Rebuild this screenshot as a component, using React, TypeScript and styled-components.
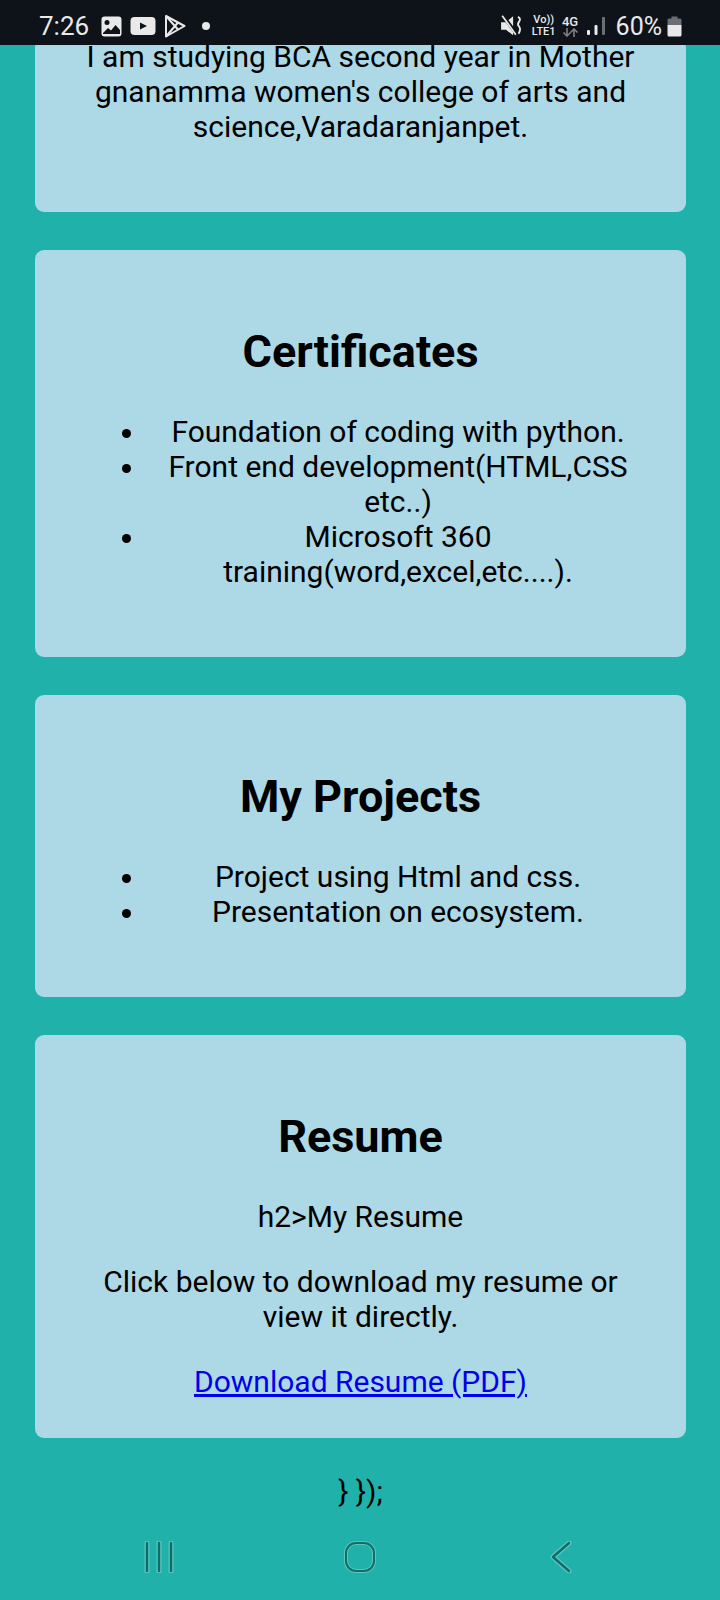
import styled, { createGlobalStyle } from "styled-components";

const GlobalStyle = createGlobalStyle`
  html, body {
    margin: 0;
    padding: 0;
    background: #20b2aa;
  }
`;

const Screen = styled.div`
  width: 720px;
  height: 1600px;
  overflow: hidden;
  display: flex;
  flex-direction: column;
  background: #20b2aa;
  color: #000;
  font-family: Roboto, "Liberation Sans", sans-serif;
`;

const StatusBar = styled.header`
  flex: none;
  height: 45px;
  padding: 7px 38px 0 39px;
  box-sizing: border-box;
  display: flex;
  align-items: center;
  background: #0d1319;
  color: #e9e9e9;
`;

const Time = styled.span`
  font-size: 26px;
  margin-right: 12px;
`;

const StatusIcons = styled.div`
  display: flex;
  align-items: center;
  gap: 8px;
`;

const Dot = styled.span`
  width: 8px;
  height: 8px;
  margin-left: 16px;
  border-radius: 50%;
  background: #e9e9e9;
`;

const Right = styled.div`
  margin-left: auto;
  display: flex;
  align-items: center;
`;

const Tiny = styled.div<{ $left: number; $size: number }>`
  display: flex;
  flex-direction: column;
  align-items: center;
  font-size: ${(p) => p.$size}px;
  font-weight: 500;
  line-height: 12px;
  margin-left: ${(p) => p.$left}px;
`;

const Percent = styled.span`
  font-size: 25px;
  margin-left: 10px;
`;

const Scroll = styled.main`
  flex: 1;
  min-height: 0;
  overflow: hidden;
  padding: 0 34px 0 35px;
  text-align: center;
  font-size: 30px;
`;

const Card = styled.section<{ $clipped?: boolean }>`
  background: #add8e6;
  border-radius: 9px;
  padding: ${(p) => (p.$clipped ? "0 40px 37.6px" : "37.3px 40px 38.6px")};
  margin: ${(p) => (p.$clipped ? "-5.6px" : "38px")} 0 0;
`;

const Heading = styled.h2`
  margin: 37.35px 0 36px;
  font-size: 45px;
  font-weight: 700;
`;

const Text = styled.p`
  margin: 0 0 30px;

  &:last-child {
    margin-bottom: 0;
  }
  &:only-child {
    margin-bottom: 30px;
  }
`;

const List = styled.ul`
  margin: 0 0 30px;
  padding: 0 0 0 72px;
`;

const Item = styled.li`
  padding-left: 3px;
`;

const ResumeLink = styled.a`
  color: #0000ee;
  text-decoration: underline;
`;

const Closing = styled.div`
  margin-top: 36px;
`;

const NavBar = styled.nav`
  flex: none;
  height: 80px;
  display: grid;
  grid-template-columns: repeat(3, 201px);
  justify-content: center;
  justify-items: center;
  align-items: start;
  padding-top: 21px;
  box-sizing: border-box;
`;

function ImageIcon() {
  return (
    <svg width="21" height="21" viewBox="0 0 21 21">
      <rect x="0.5" y="0.5" width="20" height="20" rx="3" fill="#e9e9e9" />
      <circle cx="6" cy="6.5" r="2.5" fill="#0d1319" />
      <path d="M2 17 L7 12 L10 14.5 L14.5 9 L19 14 V18 H2 Z" fill="#0d1319" />
    </svg>
  );
}

function VideoIcon() {
  return (
    <svg width="26" height="18" viewBox="0 0 26 18">
      <rect width="25" height="18" x="0.5" rx="4" fill="#e9e9e9" />
      <path d="M10 5.5 L17 9 L10 12.5 Z" fill="#0d1319" />
    </svg>
  );
}

function PlayStoreIcon() {
  return (
    <svg width="22" height="24" viewBox="0 0 22 24" fill="none" stroke="#e9e9e9" strokeWidth="2" strokeLinejoin="round">
      <path d="M2 2 L20.5 12 L2 22.5 Z" />
      <path d="M2 2 L14 15.5 M2 22.5 L14 8.5" />
    </svg>
  );
}

function MuteIcon() {
  return (
    <svg width="24" height="22" viewBox="0 0 22 20">
      <path d="M1 6.5 H5.5 L12 1 V18.5 L5.5 13.5 H1 Z" fill="#e9e9e9" />
      <path d="M3 1 L15 17" stroke="#0d1319" strokeWidth="3.2" />
      <path d="M2 0.5 L14.5 18" stroke="#e9e9e9" strokeWidth="1.6" />
      <path d="M16.5 1.5 q3 2 1 4.5 q-2 2.5 0 4.5 q2 2.5 -0.5 6.5" fill="none" stroke="#e9e9e9" strokeWidth="1.7" />
    </svg>
  );
}

function TransferIcon() {
  return (
    <svg width="17" height="9" viewBox="0 0 17 9" fill="none" stroke="#7d8084" strokeWidth="1.6">
      <path d="M5 0 V8 M1.5 4.5 L5 8 L8.5 4.5" />
      <path d="M12 9 V1 M8.5 4.5 L12 1 L15.5 4.5" />
    </svg>
  );
}

function SignalIcon() {
  return (
    <svg width="19" height="20" viewBox="0 0 19 20" style={{ marginLeft: 8 }}>
      <rect x="0" y="14" width="3" height="5" rx="1" fill="#e9e9e9" />
      <rect x="7.5" y="9" width="3" height="10" rx="1" fill="#e9e9e9" />
      <rect x="15" y="1" width="3" height="18" rx="1" fill="#6b6e72" />
    </svg>
  );
}

function BatteryIcon() {
  return (
    <svg width="15" height="21" viewBox="0 0 15 21" style={{ marginLeft: 5 }}>
      <path d="M4.5 0.5 H10.5 V2.5 H13 Q14.5 2.5 14.5 4 V9 H0.5 V4 Q0.5 2.5 2 2.5 H4.5 Z" fill="#6b6e72" />
      <path d="M0.5 9 H14.5 V19 Q14.5 20.5 13 20.5 H2 Q0.5 20.5 0.5 19 Z" fill="#e9e9e9" />
    </svg>
  );
}

const navHalo = "#5cc4bd";
const navLine = "#0f6e69";

function RecentsIcon() {
  return (
    <svg width="30" height="32" viewBox="0 0 30 32" strokeLinecap="round" fill="none">
      <path d="M3 2 V30 M15 2 V30 M27 2 V30" stroke={navHalo} strokeWidth="5" />
      <path d="M3 2 V30 M15 2 V30 M27 2 V30" stroke={navLine} strokeWidth="2.4" />
    </svg>
  );
}

function HomeIcon() {
  return (
    <svg width="32" height="32" viewBox="0 0 32 32" fill="none">
      <rect x="2" y="2" width="28" height="28" rx="10" stroke={navHalo} strokeWidth="4" />
      <rect x="2" y="2" width="28" height="28" rx="10" stroke={navLine} strokeWidth="2" />
    </svg>
  );
}

function BackIcon() {
  return (
    <svg width="22" height="32" viewBox="0 0 22 32" fill="none" strokeLinecap="round" strokeLinejoin="round">
      <path d="M19 2 L3 16 L19 30" stroke={navHalo} strokeWidth="5" />
      <path d="M19 2 L3 16 L19 30" stroke={navLine} strokeWidth="2.4" />
    </svg>
  );
}

export default function App() {
  return (
    <Screen>
      <GlobalStyle />
      <StatusBar>
        <Time>7:26</Time>
        <StatusIcons>
          <ImageIcon />
          <VideoIcon />
          <PlayStoreIcon />
        </StatusIcons>
        <Dot />
        <Right>
          <MuteIcon />
          <Tiny $left={8} $size={11}>
            <span>Vo))</span>
            <span>LTE1</span>
          </Tiny>
          <Tiny $left={6} $size={13}>
            <span>4G</span>
            <TransferIcon />
          </Tiny>
          <SignalIcon />
          <Percent>60%</Percent>
          <BatteryIcon />
        </Right>
      </StatusBar>

      <Scroll>
        <Card $clipped>
          <Text>
            I am studying BCA second year in Mother gnanamma women's college of arts and
            science,Varadaranjanpet.
          </Text>
        </Card>

        <Card>
          <Heading>Certificates</Heading>
          <List>
            <Item>Foundation of coding with python.</Item>
            <Item>Front end development(HTML,CSS etc..)</Item>
            <Item>Microsoft 360 training(word,excel,etc....).</Item>
          </List>
        </Card>

        <Card>
          <Heading>My Projects</Heading>
          <List>
            <Item>Project using Html and css.</Item>
            <Item>Presentation on ecosystem.</Item>
          </List>
        </Card>

        <Card>
          <Heading>Resume</Heading>
          <Text>h2&gt;My Resume</Text>
          <Text>Click below to download my resume or view it directly.</Text>
          <Text>
            <ResumeLink href="#">Download Resume (PDF)</ResumeLink>
          </Text>
        </Card>

        <Closing>{"} });"}</Closing>
      </Scroll>

      <NavBar>
        <RecentsIcon />
        <HomeIcon />
        <BackIcon />
      </NavBar>
    </Screen>
  );
}
